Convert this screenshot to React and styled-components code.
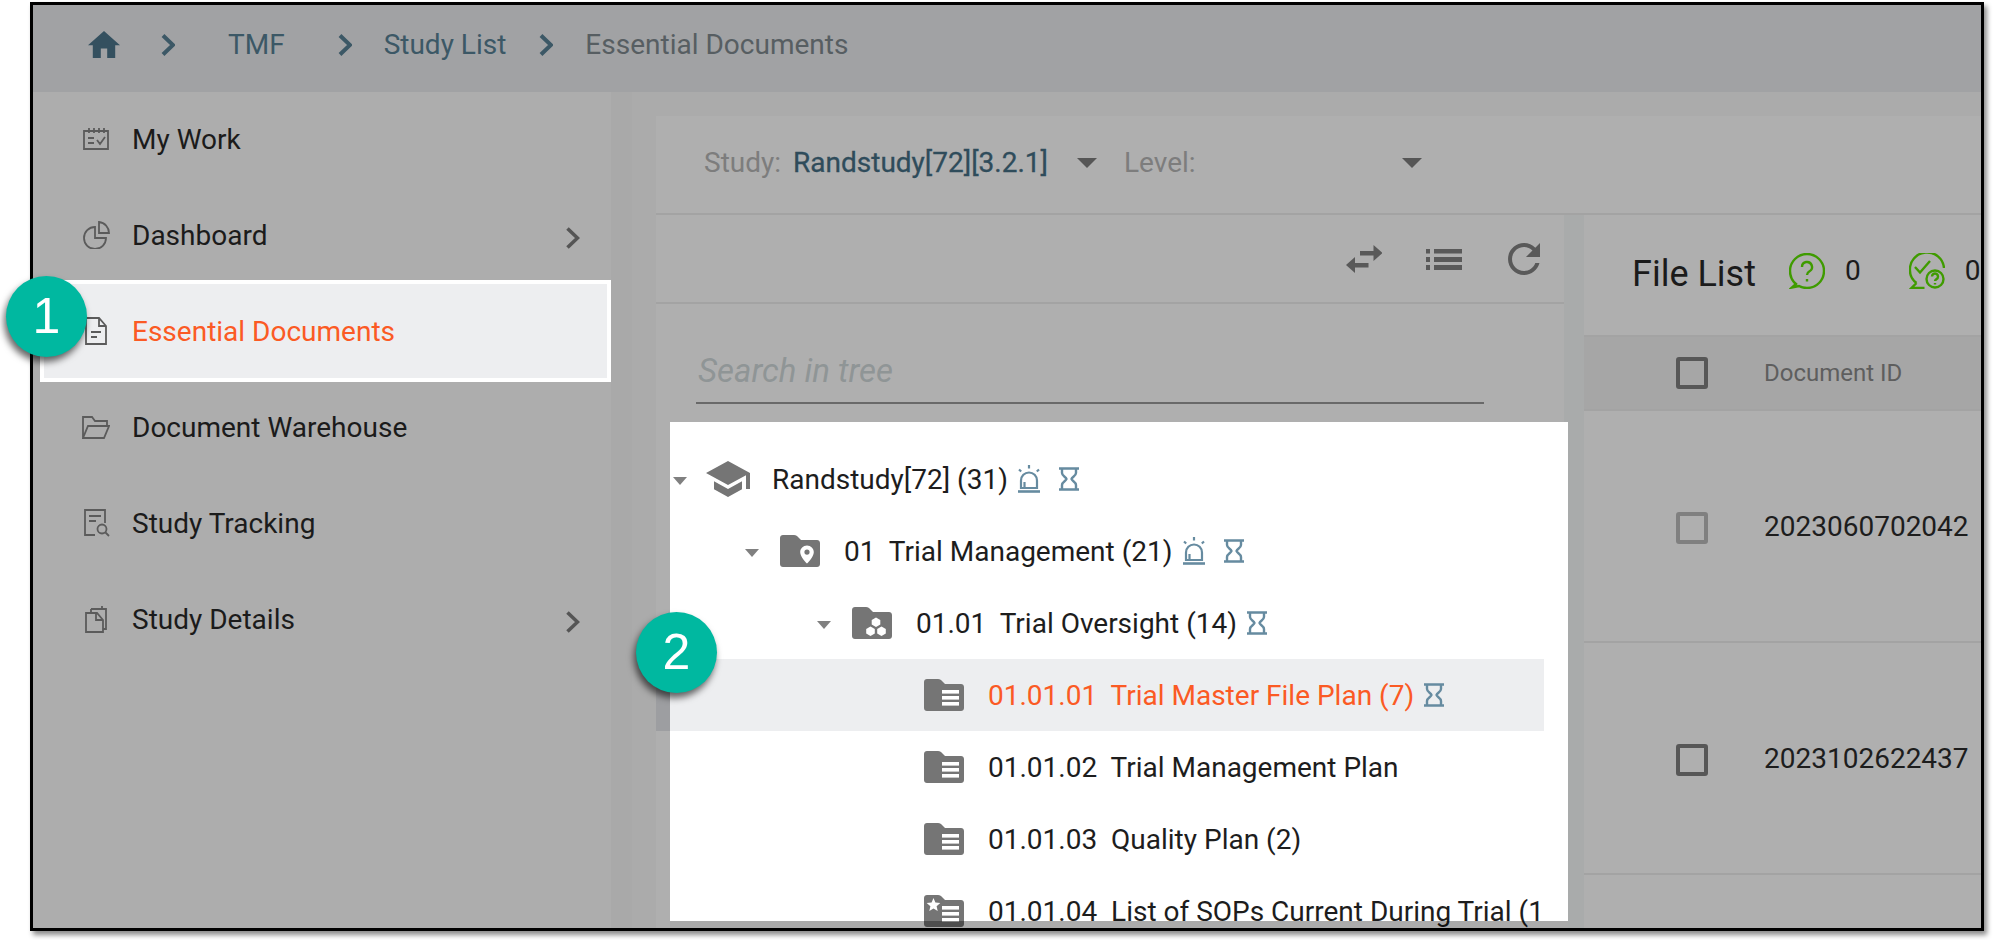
import styled, { createGlobalStyle } from 'styled-components';

const GlobalStyle = createGlobalStyle`
	html, body {
		margin: 0;
		padding: 0;
		background: #ffffff;
		font-family: Roboto, 'Liberation Sans', sans-serif;
	}
	* { box-sizing: border-box; }
`;

const Page = styled.div`
	width: 1994px;
	height: 940px;
	padding: 2px 0 0 30px;
	overflow: hidden;
`;

const Frame = styled.div`
	position: relative;
	width: 1954px;
	height: 929px;
	border: 3px solid #000000;
	box-shadow: 3px 4px 5px rgba(0, 0, 0, 0.45);
`;

const Screen = styled.div`
	display: flex;
	flex-direction: column;
	width: 100%;
	height: 100%;
	overflow: hidden;
	background: #ababab;
`;

const Badge = styled.div`
	position: absolute;
	left: ${(props) => props.$left}px;
	top: ${(props) => props.$top}px;
	width: 81px;
	height: 81px;
	border-radius: 50%;
	background: #00b8a0;
	box-shadow: -2px 5px 7px rgba(0, 0, 0, 0.6);
	color: #ffffff;
	font-family: 'Liberation Sans', Arial, sans-serif;
	font-size: 50px;
	line-height: 81px;
	text-align: center;
`;

/* header */
const Crumbs = styled.header`
	flex: none;
	display: flex;
	align-items: center;
	height: 87px;
	padding: 0 0 8px 55px;
	background: #a1a2a4;
`;

const Crumb = styled.span`
	margin-left: ${(props) => props.$gap}px;
	font-size: 28px;
	color: ${(props) => (props.$last ? '#575e62' : '#3c5866')};
`;

const CrumbArrow = styled.svg`
	flex: none;
	width: 14px;
	height: 22px;
	margin-left: ${(props) => props.$gap}px;
	fill: none;
	stroke: #3c5866;
	stroke-width: 4;
`;

const HomeIcon = styled.svg`
	flex: none;
	width: 32px;
	height: 29px;
	fill: #34505f;
`;

const Body = styled.div`
	flex: 1;
	display: flex;
	min-height: 0;
`;

/* sidebar */
const Sidebar = styled.nav`
	flex: none;
	width: 599px;
	border-right: 21px solid #a9a9a9;
	background: #adadad;
`;

const NavRow = styled.div`
	display: flex;
	align-items: center;
	height: 96px;
	padding: 0 31px 2px 49px;
	font-size: 28px;
	color: #1b1b1b;
`;

const ActiveNavRow = styled(NavRow)`
	height: 102px;
	margin: -4px 0 -2px 7px;
	padding: 0 31px 0 38px;
	border: 4px solid #ffffff;
	background: #edeef0;
	color: #fb5a24;
`;

const NavIcon = styled.svg`
	flex: none;
	width: 28px;
	height: 28px;
	margin-right: 22px;
	fill: none;
	stroke: #5b5b5b;
	stroke-width: 1.8;
`;

const NavLabel = styled.span`
	flex: 1;
`;

const NavArrow = styled.svg`
	flex: none;
	width: 15px;
	height: 22px;
	margin-top: 6px;
	fill: none;
	stroke: #555555;
	stroke-width: 3.6;
`;

/* main panel */
const Main = styled.main`
	flex: 1;
	min-width: 0;
	padding: 24px 0 0 24px;
`;

const Panel = styled.div`
	display: flex;
	flex-direction: column;
	height: 100%;
	background: #afafaf;
`;

const StudyBar = styled.div`
	flex: none;
	display: flex;
	align-items: center;
	height: 99px;
	padding: 0 0 4px 48px;
	border-bottom: 2px solid #a3a3a3;
	font-size: 28px;
`;

const FieldLabel = styled.span`
	margin-left: ${(props) => props.$gap || 0}px;
	color: #7d7d7d;
`;

const FieldValue = styled.span`
	margin-left: 12px;
	color: #2f4c5b;
	-webkit-text-stroke: 0.3px #2f4c5b;
`;

const Caret = styled.i`
	flex: none;
	display: block;
	width: 0;
	height: 0;
	margin-left: ${(props) => props.$gap}px;
	border-style: solid;
	border-width: 10px 10px 0;
	border-color: #565656 transparent transparent;
`;

const Split = styled.div`
	flex: 1;
	display: flex;
	min-height: 0;
`;

const TreePane = styled.section`
	flex: none;
	display: flex;
	flex-direction: column;
	width: 908px;
	padding-left: 14px;
`;

const TreeTools = styled.div`
	flex: none;
	display: flex;
	align-items: center;
	justify-content: flex-end;
	height: 89px;
	margin-left: -14px;
	padding: 1px 24px 0 0;
	border-bottom: 2px solid #a3a3a3;
`;

const ToolIcon = styled.svg`
	flex: none;
	width: ${(props) => props.$w}px;
	height: ${(props) => props.$h}px;
	margin-left: ${(props) => props.$gap || 0}px;
	fill: #595959;
`;

const SearchBox = styled.div`
	flex: none;
	height: 118px;
	padding-top: 46px;
`;

const SearchText = styled.div`
	width: 788px;
	height: 54px;
	margin-left: 26px;
	padding-left: 2px;
	border-bottom: 2px solid #696969;
	font-size: 33px;
	font-style: italic;
	line-height: 42px;
	color: #8f9596;
`;

const Tree = styled.div`
	position: relative;
	flex: 1;
	min-height: 0;
	width: 898px;
	padding-top: 21px;
	background: #ffffff;
	&::after {
		content: '';
		position: absolute;
		left: 0;
		right: 0;
		bottom: 0;
		height: 7px;
		background: rgba(0, 0, 0, 0.33);
	}
`;

const TreeRows = styled.div`
	height: 100%;
	width: 874px;
`;

const TreeRow = styled.div`
	position: relative;
	display: flex;
	align-items: center;
	width: 874px;
	height: 72px;
	padding-left: ${(props) => 3 + props.$level * 72}px;
	font-size: 28px;
	white-space: nowrap;
	color: ${(props) => (props.$selected ? '#fb5a24' : '#1d1d1d')};
	background: ${(props) => (props.$selected ? '#edeef0' : 'transparent')};
	${(props) =>
		props.$selected &&
		`&::before {
			content: '';
			position: absolute;
			left: -14px;
			top: 0;
			bottom: 0;
			width: 14px;
			background: #9d9ea1;
		}`}
`;

const TreeCaret = styled.i`
	flex: none;
	display: block;
	width: 0;
	height: 0;
	margin-top: 4px;
	border-style: solid;
	border-width: 8px 7px 0;
	border-color: ${(props) => (props.$hidden ? 'transparent' : '#808080')} transparent transparent;
`;

const TreeIcon = styled.svg`
	flex: none;
	width: 40px;
	height: 32px;
	margin-left: 21px;
	margin-right: 24px;
	fill: #757575;
`;

const CapIcon = styled.svg`
	flex: none;
	width: 44px;
	height: 36px;
	margin-left: 19px;
	margin-right: 22px;
	fill: #757575;
`;

const RowText = styled.span`
	flex: none;
	max-width: ${(props) => 874 - 3 - props.$level * 72 - 99}px;
	overflow: hidden;
	white-space: pre;
`;

const SirenIcon = styled.svg`
	flex: none;
	width: 22px;
	height: 28px;
	margin-left: 10px;
	fill: none;
	stroke: #668ba0;
	stroke-width: 2.2;
`;

const HourglassIcon = styled.svg`
	flex: none;
	width: 20px;
	height: 24px;
	margin-left: ${(props) => props.$gap}px;
	fill: none;
	stroke: #668ba0;
	stroke-width: 2.4;
`;

/* splitter and file list */
const Splitter = styled.div`
	flex: none;
	width: 20px;
	background: #a9abab;
`;

const FilePane = styled.section`
	flex: 1;
	min-width: 0;
	display: flex;
	flex-direction: column;
	overflow: hidden;
`;

const FileHead = styled.div`
	flex: none;
	display: flex;
	align-items: center;
	height: 120px;
	padding: 0 0 8px 48px;
	white-space: nowrap;
`;

const FileTitle = styled.h2`
	margin: 0 33px 0 0;
	padding-top: 6px;
	font-size: 36px;
	font-weight: 400;
	color: #1b1b1b;
`;

const Count = styled.span`
	margin: 0 48px 0 20px;
	padding-bottom: 2px;
	font-size: 28px;
	color: #1b1b1b;
`;

const BubbleIcon = styled.svg`
	flex: none;
	width: 36px;
	height: 36px;
	fill: none;
	stroke: #3f9b00;
	stroke-width: 2.4;
`;

const TableRow = styled.div`
	flex: none;
	display: flex;
	align-items: center;
	height: ${(props) => props.$height}px;
	padding-left: 92px;
	border-bottom: 2px solid #a3a3a3;
	background: ${(props) => (props.$head ? '#a6a6a6' : 'transparent')};
	border-top: ${(props) => (props.$head ? '2px solid #a3a3a3' : '0')};
	font-size: ${(props) => (props.$head ? '24px' : '28px')};
	color: ${(props) => (props.$head ? '#5e5e5e' : '#1d1d1d')};
	white-space: nowrap;
`;

const CheckBox = styled.span`
	flex: none;
	width: 32px;
	height: 32px;
	margin: ${(props) => (props.$head ? 0 : 4)}px 56px 0 0;
	border: 4px solid ${(props) => (props.$muted ? '#808080' : '#575757')};
	border-radius: 3px;
`;

function FolderShape({ children }) {
	return (
		<TreeIcon viewBox="0 0 40 32">
			<path d="M3 0h11c1 0 2 .4 3 1l4 4h16c1.700 0 3 1.300 3 3v21c0 1.700-1.300 3-3 3H3c-1.700 0-3-1.300-3-3V3C0 1.300 1.300 0 3 0z" />
			{children}
		</TreeIcon>
	);
}

function Lines() {
	return (
		<g fill="#ffffff">
			<rect x="18" y="11" width="17" height="3.6" />
			<rect x="18" y="17" width="17" height="3.6" />
			<rect x="18" y="23" width="17" height="3.6" />
		</g>
	);
}

function PinFolder() {
	return (
		<FolderShape>
			<path
				fill="#ffffff"
				d="M27 10.500c-3.800 0-6.800 3-6.800 6.700 0 4.700 6.800 11.300 6.800 11.300s6.800-6.600 6.800-11.300c0-3.700-3-6.700-6.800-6.700zm0 9.200a2.600 2.600 0 1 1 0-5.200 2.600 2.600 0 0 1 0 5.200z"
			/>
		</FolderShape>
	);
}

function HexFolder() {
	return (
		<FolderShape>
			<g fill="#ffffff">
				<path d="M24 10.500l4.300 2.400v4.600L24 20l-4.300-2.500v-4.600z" />
				<path d="M18.500 19.500l4.300 2.400v4.600l-4.300 2.500-4.300-2.500v-4.600z" />
				<path d="M29.500 19.500l4.300 2.400v4.600l-4.300 2.500-4.300-2.500v-4.600z" />
			</g>
		</FolderShape>
	);
}

function ListFolder() {
	return (
		<FolderShape>
			<Lines />
		</FolderShape>
	);
}

function StarFolder() {
	return (
		<FolderShape>
			<Lines />
			<path fill="#ffffff" d="M9.500 3l1.900 4.600 4.900.4-3.700 3.200 1.100 4.800-4.200-2.600L5.300 16l1.100-4.800L2.700 8l4.900-.4z" />
		</FolderShape>
	);
}

function Siren() {
	return (
		<SirenIcon viewBox="0 0 22 28">
			<path d="M3 23v-7.500a8 8 0 0 1 16 0V23zM6.500 23v-6" />
			<path d="M0 26.500h22" strokeWidth="2.600" />
			<path d="M11 0v3.500M1 4.500l2.200 2M21 4.500l-2.200 2" />
		</SirenIcon>
	);
}

function Hourglass({ gap }) {
	return (
		<HourglassIcon $gap={gap} viewBox="0 0 20 24">
			<path d="M0 1.500h20M0 22.500h20" />
			<path d="M3 2v4c0 3 4 4 4.500 6-.5 2-4.500 3-4.500 6v4M17 2v4c0 3-4 4-4.500 6 .5 2 4.500 3 4.500 6v4" />
		</HourglassIcon>
	);
}

function BreadArrow({ gap }) {
	return (
		<CrumbArrow $gap={gap} viewBox="0 0 14 22">
			<path d="M2 1.500l10 9.500-10 9.500" />
		</CrumbArrow>
	);
}

function SideArrow() {
	return (
		<NavArrow viewBox="0 0 15 22">
			<path d="M2.500 1.500l10 9.500-10 9.500" />
		</NavArrow>
	);
}

export default function App() {
	return (
		<>
			<GlobalStyle />
			<Page>
				<Frame>
					<Screen>
						<Crumbs>
							<HomeIcon viewBox="2 3 20 17">
								<path d="M10 20v-6h4v6h5v-8h3L12 3 2 12h3v8z" />
							</HomeIcon>
							<BreadArrow gap={41} />
							<Crumb $gap={53}>TMF</Crumb>
							<BreadArrow gap={53} />
							<Crumb $gap={32}>Study List</Crumb>
							<BreadArrow gap={33} />
							<Crumb $gap={32} $last>Essential Documents</Crumb>
						</Crumbs>
						<Body>
							<Sidebar>
								<NavRow>
									<NavIcon viewBox="0 0 28 28">
										<path d="M2 6h24v18H2zM7 3v5M12 3v5M17 3v5M22 3v5M6 13h6M6 18h6M15 15l3 4 5-7" />
									</NavIcon>
									<NavLabel>My Work</NavLabel>
								</NavRow>
								<NavRow>
									<NavIcon viewBox="0 0 28 28">
										<path d="M13 6a11 11 0 1 0 11 11H13z" />
										<path d="M17 1v11h10A11 11 0 0 0 17 1z" />
									</NavIcon>
									<NavLabel>Dashboard</NavLabel>
									<SideArrow />
								</NavRow>
								<ActiveNavRow>
									<NavIcon viewBox="0 0 28 28">
										<path d="M4 1h13l7 8v18H4zM17 1v8h7M9 15h10M9 20h6" />
									</NavIcon>
									<NavLabel>Essential Documents</NavLabel>
								</ActiveNavRow>
								<NavRow>
									<NavIcon viewBox="0 0 28 28">
										<path d="M1 25V4h9l3 4h12v5M1 25h21l5-12H6z" />
									</NavIcon>
									<NavLabel>Document Warehouse</NavLabel>
								</NavRow>
								<NavRow>
									<NavIcon viewBox="0 0 28 28">
										<path d="M13 26H3V1h20v13M7 7h12M7 12h7" />
										<circle cx="20" cy="20" r="4.500" />
										<path d="M23.500 23.500L27 27" />
									</NavIcon>
									<NavLabel>Study Tracking</NavLabel>
								</NavRow>
								<NavRow>
									<NavIcon viewBox="0 0 28 28">
										<path d="M4 8h11l6 7v12H4zM14 8v7h7M9 4v3M20 1v3M9 4h15v20h-3" />
									</NavIcon>
									<NavLabel>Study Details</NavLabel>
									<SideArrow />
								</NavRow>
							</Sidebar>
							<Main>
								<Panel>
									<StudyBar>
										<FieldLabel>Study:</FieldLabel>
										<FieldValue>Randstudy[72][3.2.1]</FieldValue>
										<Caret $gap={29} />
										<FieldLabel $gap={27}>Level:</FieldLabel>
										<Caret $gap={206} />
									</StudyBar>
									<Split>
										<TreePane>
											<TreeTools>
												<ToolIcon $w={36} $h={28} viewBox="0 0 36 28">
													<path d="M14 6h13.500V0l9 8-9 8v-5.500H14zM22.500 18H9v-6l-9 8 9 8v-5.500h13.500z" />
												</ToolIcon>
												<ToolIcon $w={36} $h={21} $gap={44} viewBox="0 0 36 21">
													<path d="M0 0h4v4.500H0zM8 0h28v4.500H8zM0 8h4v5H0zM8 8h28v5H8zM0 16h4v5H0zM8 16h28v5H8z" />
												</ToolIcon>
												<ToolIcon $w={32} $h={32} $gap={46} viewBox="4 4 16 16">
													<path d="M17.650 6.350C16.200 4.900 14.210 4 12 4c-4.420 0-7.990 3.580-7.990 8s3.570 8 7.990 8c3.730 0 6.840-2.550 7.730-6h-2.080c-.82 2.330-3.040 4-5.650 4-3.310 0-6-2.690-6-6s2.690-6 6-6c1.660 0 3.140.69 4.220 1.780L13 11h7V4l-2.350 2.350z" />
												</ToolIcon>
											</TreeTools>
											<SearchBox>
												<SearchText>Search in tree</SearchText>
											</SearchBox>
											<Tree>
												<TreeRows>
													<TreeRow $level={0}>
														<TreeCaret />
														<CapIcon viewBox="1 3 22 18">
															<path d="M5 13.180v4L12 21l7-3.820v-4L12 17l-7-3.820zM12 3L1 9l11 6 9-4.910V17h2V9L12 3z" />
														</CapIcon>
														<RowText $level={0}>Randstudy[72] (31)</RowText>
														<Siren />
														<Hourglass gap={19} />
													</TreeRow>
													<TreeRow $level={1}>
														<TreeCaret />
														<PinFolder />
														<RowText $level={1}>01  Trial Management (21)</RowText>
														<Siren />
														<Hourglass gap={19} />
													</TreeRow>
													<TreeRow $level={2}>
														<TreeCaret />
														<HexFolder />
														<RowText $level={2}>01.01  Trial Oversight (14)</RowText>
														<Hourglass gap={10} />
													</TreeRow>
													<TreeRow $level={3} $selected>
														<TreeCaret $hidden />
														<ListFolder />
														<RowText $level={3}>01.01.01  Trial Master File Plan (7)</RowText>
														<Hourglass gap={10} />
													</TreeRow>
													<TreeRow $level={3}>
														<TreeCaret $hidden />
														<ListFolder />
														<RowText $level={3}>01.01.02  Trial Management Plan</RowText>
													</TreeRow>
													<TreeRow $level={3}>
														<TreeCaret $hidden />
														<ListFolder />
														<RowText $level={3}>01.01.03  Quality Plan (2)</RowText>
													</TreeRow>
													<TreeRow $level={3}>
														<TreeCaret $hidden />
														<StarFolder />
														<RowText $level={3}>01.01.04  List of SOPs Current During Trial (14)</RowText>
													</TreeRow>
												</TreeRows>
											</Tree>
										</TreePane>
										<Splitter />
										<FilePane>
											<FileHead>
												<FileTitle>File List</FileTitle>
												<BubbleIcon viewBox="0 0 36 36">
													<path d="M7 31c-3.500-3-6-7.500-6-13a17 17 0 1 1 17 17c-3.500 0-6-.8-8-2l-7 1.500z" />
													<path d="M13 14a5 5 0 1 1 7.500 4.300c-1.600.9-2.500 1.700-2.500 3.700M18 26v2.500" />
												</BubbleIcon>
												<Count>0</Count>
												<BubbleIcon viewBox="0 0 36 36">
													<path d="M7.500 30C3.500 27 1 23 1 18a17 17 0 0 1 34-3M7.500 30l-5 5h13" />
													<path d="M6 14l5 5.500L21 8" />
													<circle cx="26" cy="26" r="8.500" />
													<path d="M23 23.500a3 3 0 1 1 4.500 2.600c-1 .6-1.500 1-1.500 2M26 30v1.500" />
												</BubbleIcon>
												<Count>0</Count>
											</FileHead>
											<TableRow $head $height={76}>
												<CheckBox $head />
												Document ID
											</TableRow>
											<TableRow $height={232}>
												<CheckBox $muted />
												2023060702042
											</TableRow>
											<TableRow $height={232}>
												<CheckBox />
												2023102622437
											</TableRow>
										</FilePane>
									</Split>
								</Panel>
							</Main>
						</Body>
					</Screen>
					<Badge $left={-27} $top={271}>1</Badge>
					<Badge $left={603} $top={607}>2</Badge>
				</Frame>
			</Page>
		</>
	);
}
